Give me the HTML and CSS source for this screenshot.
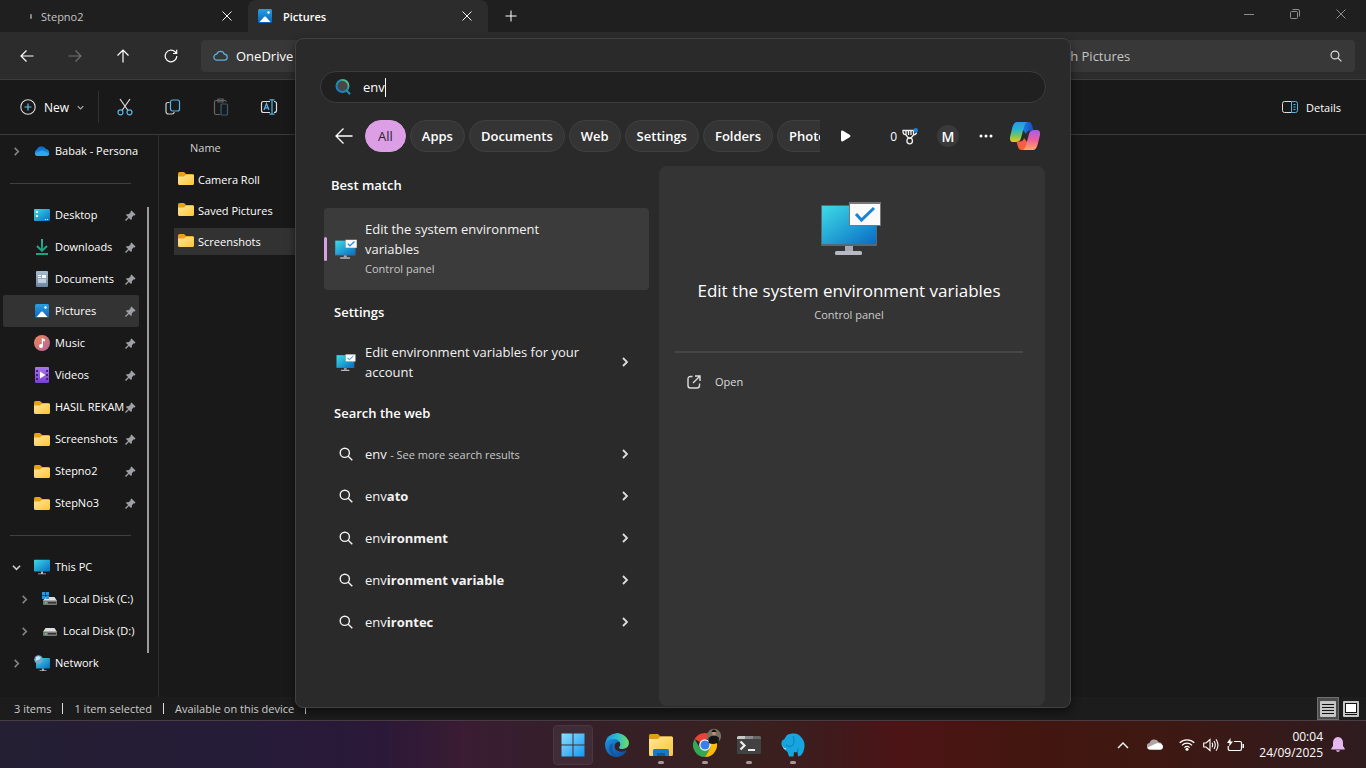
FILE: index.html
```
<!DOCTYPE html>
<html lang="en">
<head>
    <meta charset="UTF-8">
    <meta name="viewport" content="width=device-width, initial-scale=1.0">
    <title>Pictures - File Explorer</title>
    <link rel="stylesheet" href="styles.css">
</head>
<body>
    <!-- shared icons -->
    <svg class="sprite" aria-hidden="true">
        <defs>
            <linearGradient id="gScreen" x1="0" y1="0" x2="1" y2="1"><stop offset="0" stop-color="#3ddbe6"/><stop offset="1" stop-color="#0a6cc4"/></linearGradient>
            <linearGradient id="gFolder" x1="0" y1="0" x2="1" y2="1"><stop offset="0" stop-color="#ffe69a"/><stop offset="1" stop-color="#fdc633"/></linearGradient>
            <linearGradient id="gPicture" x1="0" y1="0" x2="0" y2="1"><stop offset="0" stop-color="#2a9fe0"/><stop offset="1" stop-color="#0d62b8"/></linearGradient>
            <linearGradient id="gCloud" x1="0" y1="0" x2="0" y2="1"><stop offset="0" stop-color="#0a62bd"/><stop offset="1" stop-color="#2aa8f2"/></linearGradient>
            <linearGradient id="gMusic" x1="0" y1="0" x2="1" y2="1"><stop offset="0" stop-color="#f08a56"/><stop offset="1" stop-color="#b0629c"/></linearGradient>
            <linearGradient id="gVideo" x1="0" y1="0" x2="0" y2="1"><stop offset="0" stop-color="#a877f0"/><stop offset="1" stop-color="#7a3fd0"/></linearGradient>
            <linearGradient id="gDoc" x1="0" y1="0" x2="0" y2="1"><stop offset="0" stop-color="#a9bccd"/><stop offset="1" stop-color="#6c87a3"/></linearGradient>
            <linearGradient id="gDown" x1="0" y1="0" x2="0" y2="1"><stop offset="0" stop-color="#37c2a0"/><stop offset="1" stop-color="#16a27d"/></linearGradient>
            <linearGradient id="gLens" x1="1" y1="0" x2="0" y2="1"><stop offset="0" stop-color="#7fd07f"/><stop offset=".4" stop-color="#1b93a8"/><stop offset="1" stop-color="#1579d0"/></linearGradient>
            <linearGradient id="gWin" x1="0" y1="0" x2="1" y2="1"><stop offset="0" stop-color="#8be0ff"/><stop offset="1" stop-color="#1597f2"/></linearGradient>
            <linearGradient id="gEdgeTop" x1="0" y1="0" x2="1" y2="0"><stop offset="0" stop-color="#1f90dc"/><stop offset=".5" stop-color="#2cbcd2"/><stop offset="1" stop-color="#6de060"/></linearGradient>
            <linearGradient id="gEdgeLow" x1="0" y1="0" x2="1" y2="1"><stop offset="0" stop-color="#1e94e2"/><stop offset="1" stop-color="#0c4694"/></linearGradient>
            <linearGradient id="gCopTop" x1="0" y1="0" x2="1" y2="0"><stop offset="0" stop-color="#1a8be8"/><stop offset="1" stop-color="#1c48c4"/></linearGradient>
            <linearGradient id="gCopLeft" x1="0" y1="0" x2="0" y2="1"><stop offset="0" stop-color="#2a96ee"/><stop offset=".35" stop-color="#22b3d6"/><stop offset=".7" stop-color="#7cc45a"/><stop offset="1" stop-color="#f0c823"/></linearGradient>
            <linearGradient id="gCopRight" x1="0" y1="0" x2="0" y2="1"><stop offset="0" stop-color="#a45df0"/><stop offset=".5" stop-color="#ee5f9c"/><stop offset="1" stop-color="#fba868"/></linearGradient>

            <symbol id="folder" viewBox="0 0 16 13"><path fill="#e6a316" d="M0 2Q0 0 1.500 0H6L8 2H14.500Q16 2 16 3.500V6H0z"/><path fill="url(#gFolder)" d="M0 4.500H6L8 2.800H15Q16 2.800 16 4V11.500Q16 13 14.500 13H1.500Q0 13 0 11.500z"/></symbol>
            <symbol id="picture" viewBox="0 0 14 14"><rect width="14" height="14" rx="1.500" fill="url(#gPicture)"/><path fill="#fff" d="M1.500 13L6.200 7.800Q7 7 7.800 7.800L12.500 13z"/><circle cx="10.500" cy="3.500" r="1.200" fill="#fff"/></symbol>
            <symbol id="pin" viewBox="0 0 12 12"><path fill="#9da1a5" d="M7 0.500L11.500 5 10.500 6 9.600 5.800 7.500 8 7.400 10.200 6.600 11 4.300 8.600 1 12 0 11 3.400 7.700 1 5.400 1.800 4.600 4 4.500 6.200 2.400 6 1.500z"/></symbol>
            <symbol id="chevron" viewBox="0 0 10 10"><path fill="none" stroke="currentColor" stroke-width="1.800" d="M3 1L7 5 3 9"/></symbol>
            <symbol id="chevron-down" viewBox="0 0 10 10"><path fill="none" stroke="currentColor" stroke-width="1.800" d="M1 3L5 7 9 3"/></symbol>
            <symbol id="close" viewBox="0 0 10 10"><path fill="none" stroke="currentColor" d="M.5 .5L9.500 9.500M9.500 .5L.5 9.500"/></symbol>
            <symbol id="arrow" viewBox="0 0 14 14"><path fill="none" stroke="currentColor" stroke-width="1.200" d="M13.500 7H1M6.500 1.500L1 7l5.500 5.500"/></symbol>
            <symbol id="lens" viewBox="0 0 14 14"><g fill="none" stroke="currentColor" stroke-width="1.400"><circle cx="5.800" cy="5.800" r="4.600"/><path d="M9.200 9.200L13.300 13.300"/></g></symbol>
            <symbol id="monitor" viewBox="0 0 16 15"><rect width="16" height="12" rx=".8" fill="url(#gScreen)"/><path fill="#b5bcc4" d="M7 12h2v2h3v1H4v-1h3z"/></symbol>
            <symbol id="monitor-check" viewBox="0 0 60 53"><rect y="3" width="56" height="41" rx="1" fill="#52697a"/><rect x="1" y="4" width="54" height="38" fill="url(#gScreen)"/><path fill="#a9a9b3" d="M24 44h8v5h-8z"/><rect x="14" y="49" width="27" height="4" rx="1.500" fill="#b9b9c6"/><rect x="28" width="32" height="24" fill="#777"/><rect x="29" y="2" width="30" height="21" fill="#fafafa"/><path fill="none" stroke="#1a83d6" stroke-width="3" d="M35 12l5.500 6L53 6"/></symbol>
            <symbol id="drive" viewBox="0 0 14 8"><path fill="#dedede" d="M2.500 0h9L14 4H0z"/><rect y="3.500" width="14" height="4.500" rx="1" fill="#777"/><path fill="#333" d="M5 5h8v1.500H5z"/><path fill="#4be36b" d="M2 5h1.500v1.500H2z"/></symbol>
        </defs>
    </svg>

    <div class="desktop">
        <main class="window">
            <div class="titlebar">
                <div class="tab">
                    <span class="spinner"></span>
                    <span class="tab-name">Stepno2</span>
                    <button class="tab-close" aria-label="Close tab"><svg width="10" height="10"><use href="#close"/></svg></button>
                </div>
                <div class="tab tab-active">
                    <svg width="14" height="14"><use href="#picture"/></svg>
                    <span class="tab-name">Pictures</span>
                    <button class="tab-close" aria-label="Close tab"><svg width="10" height="10"><use href="#close"/></svg></button>
                </div>
                <button class="new-tab" aria-label="New tab"><svg width="12" height="12" viewBox="0 0 12 12"><path stroke="currentColor" d="M6 .5v11M.5 6h11"/></svg></button>
                <div class="controls">
                    <button aria-label="Minimize"><svg width="10" height="10" viewBox="0 0 10 10"><path stroke="currentColor" d="M0 5.500h10"/></svg></button>
                    <button aria-label="Restore"><svg width="10" height="10" viewBox="0 0 10 10"><g fill="none" stroke="currentColor"><rect x=".5" y="2.500" width="7" height="7" rx="1"/><path d="M2.500 .5H8Q9.500 .5 9.500 2V7.500"/></g></svg></button>
                    <button aria-label="Close"><svg width="10" height="10"><use href="#close"/></svg></button>
                </div>
            </div>

            <nav class="navbar">
                <button class="nav-btn" aria-label="Back"><svg width="14" height="14"><use href="#arrow"/></svg></button>
                <button class="nav-btn dim" aria-label="Forward"><svg class="flip" width="14" height="14"><use href="#arrow"/></svg></button>
                <button class="nav-btn" aria-label="Up"><svg class="up" width="14" height="14"><use href="#arrow"/></svg></button>
                <button class="nav-btn" aria-label="Refresh"><svg width="14" height="14" viewBox="0 0 14 14"><path fill="none" stroke="currentColor" stroke-width="1.200" d="M12.800 7A5.800 5.800 0 1 1 11 2.800L12.500 4.300M12.700 .8V4.500H9"/></svg></button>
                <div class="address">
                    <svg width="15" height="11" viewBox="0 0 15 11"><path fill="none" stroke="#5cb3dc" stroke-width="1.200" d="M4 10.200A3 3 0 0 1 3.700 4.200 4 4 0 0 1 11.300 4.200 3 3 0 0 1 11.200 10.200z"/></svg>
                    <span>OneDrive</span>
                </div>
                <div class="window-search">
                    <input type="text" aria-label="Search Pictures" placeholder="Search Pictures">
                    <svg width="12" height="12"><use href="#lens"/></svg>
                </div>
            </nav>

            <div class="toolbar">
                <button class="new-btn">
                    <svg width="16" height="16" viewBox="0 0 16 16"><circle cx="8" cy="8" r="7.200" fill="none" stroke="#ddd" stroke-width="1.100"/><path stroke="#62bfe8" stroke-width="1.200" d="M8 4.500v7M4.500 8h7"/></svg>
                    New
                    <svg class="small-chevron" width="7" height="7"><use href="#chevron-down"/></svg>
                </button>
                <button class="tool" aria-label="Cut"><svg width="16" height="18" viewBox="0 0 16 18"><g fill="none" stroke-width="1.200"><path stroke="#ddd" d="M3 1L11 12.500M13 1L5 12.500"/><g stroke="#55b5e6"><circle cx="3.500" cy="14.300" r="2.500"/><circle cx="12.500" cy="14.300" r="2.500"/></g></g></svg></button>
                <button class="tool" aria-label="Copy"><svg width="16" height="16" viewBox="0 0 16 16"><g fill="none" stroke-width="1.200"><path stroke="#ccc" d="M4.500 3.500H3Q1 3.500 1 5.500V12.500Q1 15 3.500 15H7Q9 15 9.300 13"/><rect x="5.500" y="1" width="9" height="11" rx="2" stroke="#55b5e6"/></g></svg></button>
                <button class="tool" aria-label="Paste"><svg width="16" height="18" viewBox="0 0 16 18"><g fill="none" stroke-width="1.200"><path stroke="#666" d="M7 16.500H3Q1.500 16.500 1.500 15V4Q1.500 2.500 3 2.500H12Q13 2.500 13 4M5 1h5v3H5z"/><rect x="8" y="6" width="6.500" height="11" rx="1" stroke="#365c72"/></g></svg></button>
                <button class="tool" aria-label="Rename"><svg width="18" height="16" viewBox="0 0 18 16"><g fill="none" stroke-width="1.200"><path stroke="#ddd" d="M10 2.500H3.500Q1.500 2.500 1.500 4.500V11.500Q1.500 13.500 3.500 13.500H10M14 2.500Q16.500 2.500 16.500 4.500V11.500Q16.500 13.500 14 13.500"/><path stroke="#55b5e6" d="M9.500 .8h5M12 .8v14.400M9.500 15.200h5M4 11l2.500-6.500L9 11M5 8.800h3"/></g></svg></button>
                <button class="details">
                    <svg width="16" height="12" viewBox="0 0 16 12"><g fill="none"><path stroke="#ddd" d="M9.500 .5H2.500Q.5 .5 .5 2.500V9.500Q.5 11.500 2.500 11.500H9.500"/><path stroke="#55b5e6" d="M9.500 .5H13.500Q15.500 .5 15.500 2.500V9.500Q15.500 11.500 13.500 11.500H9.500zM11.500 3.500h2M11.500 6h2M11.500 8.500h2"/></g></svg>
                    Details
                </button>
            </div>

            <div class="content">
                <aside class="sidebar">
                    <div class="tree">
                        <a class="node" href="#"><svg class="toggle" width="9" height="9"><use href="#chevron"/></svg><svg class="node-icon" viewBox="0 0 16 16"><path fill="url(#gCloud)" d="M3.500 13A3.500 3.500 0 0 1 2.800 6.500 5 5 0 0 1 12 6 3.600 3.600 0 0 1 12.500 13z"/><path fill="#2fa7ee" d="M3.500 13Q1 13 .8 10.500L8 7.500 15.500 11Q14.500 13 12.500 13z"/></svg><span>Babak - Persona</span></a>
                        <hr>
                        <a class="node pinned" href="#"><svg class="node-icon" viewBox="0 0 16 16"><rect y="2" width="16" height="12" rx="1" fill="url(#gScreen)"/><path fill="#fff" d="M2 4h2v2H2zM2 8h2v2H2zM11 12h1v1h-1zM13 12h1v1h-1z"/></svg><span>Desktop</span><svg class="pin"><use href="#pin"/></svg></a>
                        <a class="node pinned" href="#"><svg class="node-icon" viewBox="0 0 16 16"><path fill="none" stroke="url(#gDown)" stroke-width="1.800" d="M8.010 0L8 11.500M3 7L8 12 13 7"/><path fill="#1aa582" d="M2 14h12v2H2z"/></svg><span>Downloads</span><svg class="pin"><use href="#pin"/></svg></a>
                        <a class="node pinned" href="#"><svg class="node-icon" viewBox="0 0 16 16"><rect x="2" width="12" height="16" rx="1" fill="url(#gDoc)"/><path fill="#fff" d="M4 4h3v1H4zM4 6h3v1H4zM8 4h4v3H8zM4 8.500h8v1H4zM4 10.500h8v1H4z"/></svg><span>Documents</span><svg class="pin"><use href="#pin"/></svg></a>
                        <a class="node pinned node-active" href="#"><svg class="node-icon picture-icon" viewBox="0 0 14 14"><use href="#picture"/></svg><span>Pictures</span><svg class="pin"><use href="#pin"/></svg></a>
                        <a class="node pinned" href="#"><svg class="node-icon" viewBox="0 0 16 16"><circle cx="8" cy="8" r="8" fill="url(#gMusic)"/><circle cx="7" cy="11" r="2" fill="#fff"/><path fill="#fff" d="M7.800 3L11 4.500V6.500L9 5.700V11H7.800z"/></svg><span>Music</span><svg class="pin"><use href="#pin"/></svg></a>
                        <a class="node pinned" href="#"><svg class="node-icon" viewBox="0 0 16 16"><rect x="1" width="14" height="16" rx="1" fill="url(#gVideo)"/><path fill="#43217e" d="M2 3h2v2H2zM2 7h2v2H2zM2 11h2v2H2zM12 3h2v2h-2zM12 7h2v2h-2zM12 11h2v2h-2z"/><path fill="#fff" d="M6 4.500L11.500 8 6 11.500z"/></svg><span>Videos</span><svg class="pin"><use href="#pin"/></svg></a>
                        <a class="node pinned" href="#"><svg class="node-icon folder-icon"><use href="#folder"/></svg><span>HASIL REKAM</span><svg class="pin"><use href="#pin"/></svg></a>
                        <a class="node pinned" href="#"><svg class="node-icon folder-icon"><use href="#folder"/></svg><span>Screenshots</span><svg class="pin"><use href="#pin"/></svg></a>
                        <a class="node pinned" href="#"><svg class="node-icon folder-icon"><use href="#folder"/></svg><span>Stepno2</span><svg class="pin"><use href="#pin"/></svg></a>
                        <a class="node pinned" href="#"><svg class="node-icon folder-icon"><use href="#folder"/></svg><span>StepNo3</span><svg class="pin"><use href="#pin"/></svg></a>
                        <hr>
                        <a class="node" href="#"><svg class="toggle open" width="9" height="9"><use href="#chevron-down"/></svg><svg class="node-icon" viewBox="0 0 16 15"><use href="#monitor"/></svg><span>This PC</span></a>
                        <a class="node child" href="#"><svg class="toggle" width="9" height="9"><use href="#chevron"/></svg><svg class="node-icon" viewBox="0 0 16 16"><svg x="1" y="6" width="14" height="8"><use href="#drive"/></svg><path fill="#2b95e0" d="M0 1h3.200v3.200H0zM3.800 1H7v3.200H3.800zM0 4.800h3.200V8H0zM3.800 4.800H7V8H3.800z"/></svg><span>Local Disk (C:)</span></a>
                        <a class="node child" href="#"><svg class="toggle" width="9" height="9"><use href="#chevron"/></svg><svg class="node-icon" viewBox="0 0 16 16"><svg x="1" y="5" width="14" height="8"><use href="#drive"/></svg></svg><span>Local Disk (D:)</span></a>
                        <a class="node" href="#"><svg class="toggle" width="9" height="9"><use href="#chevron"/></svg><svg class="node-icon" viewBox="0 0 16 16"><svg x="2" y="3" width="14" height="13"><use href="#monitor"/></svg><circle cx="4.500" cy="4.500" r="4.300" fill="#6fa9cf"/><path fill="#c9e4f2" d="M2 2.500Q4 .5 6 2T4 5 2 4z"/></svg><span>Network</span></a>
                    </div>
                    <div class="scrollbar"></div>
                </aside>
                <section class="files">
                    <table class="file-table">
                        <thead><tr><th>Name</th></tr></thead>
                        <tbody>
                            <tr><td><svg class="file-icon"><use href="#folder"/></svg>Camera Roll</td></tr>
                            <tr><td><svg class="file-icon"><use href="#folder"/></svg>Saved Pictures</td></tr>
                            <tr class="selected"><td><svg class="file-icon"><use href="#folder"/></svg>Screenshots</td></tr>
                        </tbody>
                    </table>
                </section>
            </div>

            <footer class="status">
                <span>3 items</span>
                <span>1 item selected</span>
                <span>Available on this device</span>
                <div class="views">
                    <button class="view view-active" aria-label="Details view"><svg width="16" height="16" viewBox="0 0 16 16"><rect width="16" height="16" rx="1" fill="#c6c6c6"/><path stroke="#111" d="M2 3.500h12M2 6.500h12M2 9.500h12M2 12.500h12"/></svg></button>
                    <button class="view" aria-label="Large icons view"><svg width="16" height="16" viewBox="0 0 16 16"><rect width="16" height="16" rx="1" fill="#c6c6c6"/><rect x="2.500" y="2.500" width="11" height="9" fill="#fff" stroke="#111"/><path stroke="#111" d="M2 13.500h12"/></svg></button>
                </div>
            </footer>
        </main>

        <footer class="taskbar">
            <div class="apps">
                <button class="app app-active" aria-label="Start"><svg width="24" height="24" viewBox="0 0 24 24"><path fill="url(#gWin)" d="M.5 .5h11v11H.5zM12.500 .5h11v11h-11zM.5 12.500h11v11H.5zM12.500 12.500h11v11h-11z"/></svg></button>
                <button class="app" aria-label="Edge"><svg width="24" height="24" viewBox="0 0 24 24"><path fill="url(#gEdgeLow)" d="M0 12Q.5 5 7 4q5-.5 8 3l-1 2q-4 0-4.500 4 0 4.500 5 5.500 4 .6 7.500-1.500Q18.500 24 12 24 1 23.500 0 12z"/><path fill="url(#gEdgeTop)" d="M0 12Q1 1 12 0q8 .5 11.500 7.500Q25.500 15 18 16q-4 .3-4-1.700 2-1.800.8-5Q13 6 8.500 6 2 6.500 0 12z"/><path fill="#0d4d99" d="M8 10q-2.500 9 4 13Q6 23 4 17q-.5-5 4-7z" opacity=".6"/></svg></button>
                <button class="app running" aria-label="File Explorer"><svg width="24" height="24" viewBox="0 0 24 24"><path fill="#e09e12" d="M0 2.500Q0 1 1.500 1H9l2.500 2.500H23v8H0z"/><path fill="url(#gFolder)" d="M0 6h9l2.500-2.500H23Q24 3.500 24 5V21.500Q24 23 22.500 23H1.500Q0 23 0 21.500z"/><path fill="#1878ca" d="M4 23v-5.500Q4 16 5.500 16h13Q20 16 20 17.500V23z"/><path fill="#0e5aa4" d="M8 20h8v3H8z"/></svg></button>
                <button class="app running" aria-label="Chrome"><svg width="34" height="34" viewBox="0 0 34 34"><g transform="translate(5 5)"><path fill="#ea4335" d="M12 12L1.600 6A12 12 0 0 1 22.400 6H12z"/><path fill="#34a853" d="M1.600 6A12 12 0 0 0 12 24l5.200-9L6.800 15z"/><path fill="#fbbc04" d="M22.400 6A12 12 0 0 1 12 24l5.200-9V6z"/><circle cx="12" cy="12" r="5.800" fill="#fff"/><circle cx="12" cy="12" r="4.600" fill="#3b7ded"/></g><circle cx="26" cy="8" r="7.200" fill="#77705f"/><path fill="#171415" d="M20.500 15V10q2-2.500 5.500-2.500t5 2.500l-.5 4.500Q26 17 20.500 15z"/><ellipse cx="26" cy="5" rx="2" ry="2.500" fill="#b98c76"/><path fill="#161214" d="M23.500 4Q24 1.500 26 1.500T28.500 4z"/></svg></button>
                <button class="app running" aria-label="Terminal"><svg width="24" height="18" viewBox="0 0 24 18"><rect width="24" height="18" rx="1.500" fill="#424242"/><path fill="#c8c8c8" d="M0 1.500Q0 0 1.500 0H8v3H0z"/><path fill="#8b8b8b" d="M8 0h8v3H8z"/><path fill="#686868" d="M16 0h6.500Q24 0 24 1.500V3h-8z"/><path fill="none" stroke="#eee" stroke-width="2.200" d="M3.500 5.500L7.500 9.500 3.500 13.500M11 14h7"/></svg></button>
                <button class="app running" aria-label="Laragon"><svg width="24" height="24" viewBox="0 0 24 24"><path fill="#17a5e0" d="M6 2Q9 0 12.500 .5 17 0 20 4q4 4 3.500 10-.5 5-3.500 8.500l-3 1-.5-4.500q-2 .5-3.500 0l-.5 4.500H8L6.500 19Q2 16 .5 12 0 7 3 6.500z"/><path fill="none" stroke="#0c78ad" stroke-width=".9" d="M12 3q2.500 6-.5 9.500-3 2.500-6.500-.5M16.500 19.500l.5-4"/><path fill="#eee" d="M1.500 12.500q1 3 3.500 2.800l-.5 1.500Q2 16 1.500 12.500z"/></svg></button>
            </div>
            <div class="tray">
                <button class="tray-btn" aria-label="Show hidden icons"><svg width="12" height="8" viewBox="0 0 12 8"><path fill="none" stroke="#fff" stroke-width="1.400" d="M1 7L6 2 11 7"/></svg></button>
                <button class="tray-btn onedrive" aria-label="OneDrive"><svg width="16" height="11" viewBox="0 0 16 11"><path fill="#b0a4a4" d="M3 10A3 3 0 0 1 2.500 4 5 5 0 0 1 11.800 3.200 3.500 3.500 0 0 1 13 10z"/><path fill="#fff" d="M3 10.800Q.5 10.500 .3 8.500L9 4.500Q11 3.500 13 4.500 16 5.500 16 8T13.500 10.800z"/></svg></button>
                <button class="tray-btn status-icons" aria-label="Network, volume and battery">
                    <svg width="16" height="13" viewBox="0 0 16 13"><g fill="none" stroke="#fff" stroke-width="1.200"><path d="M.7 4.800A10.500 10.500 0 0 1 15.300 4.800M3 7.300A7 7 0 0 1 13 7.300M5.400 9.600A3.800 3.800 0 0 1 10.600 9.600"/></g><circle cx="8" cy="11.300" r="1.500" fill="#fff"/></svg>
                    <svg width="16" height="14" viewBox="0 0 16 14"><g fill="none" stroke="#fff" stroke-width="1.100"><path d="M.7 5v4H3l4 3.500v-11L3 5zM9 4.800Q10.300 7 9 9.200M11 3Q13.500 7 11 11M13 1.200Q17 7 13 12.800"/></g></svg>
                    <svg width="17" height="14" viewBox="0 0 17 14"><path fill="none" stroke="#fff" stroke-width="1.200" d="M7 3.500h6Q14.500 3.500 14.500 5v5.500Q14.500 12.500 13 12.500H3Q1.200 12.500 1.200 10.500V8"/><path fill="#fff" d="M3.500 0L0 5h2.500L2 8.500 6 3.500H3.500zM15.500 6h1.500v4h-1.500z"/></svg>
                </button>
                <div class="clock"><time>00:04</time><span>24/09/2025</span></div>
                <button class="tray-btn" aria-label="Notifications"><svg width="14" height="15" viewBox="0 0 14 15"><path fill="#e6b8ef" d="M7 0Q11.800 .5 12 5.500V9L13.700 11.500V12.500H.3V11.500L2 9V5.500Q2.200 .5 7 0zM5 13.200h4Q8.500 15 7 15T5 13.200z"/></svg></button>
            </div>
        </footer>

        <!-- start menu search -->
        <section class="flyout">
            <label class="search-box">
                <svg width="16" height="16" viewBox="0 0 16 16"><g fill="none" stroke="url(#gLens)" stroke-width="2"><circle cx="7.500" cy="7" r="6" fill="#4b4646"/><path d="M11.500 11.500L15 15.300"/></g></svg>
                <input class="search-input" type="text" value="env" aria-label="Search">
                <span class="caret"></span>
            </label>

            <div class="filters">
                <button class="back" aria-label="Back"><svg width="18" height="18" viewBox="0 0 18 18"><path fill="none" stroke="#fff" stroke-width="1.300" d="M17.500 9H1M8.500 1.500L1 9l7.500 7.500"/></svg></button>
                <div class="pills">
                    <button class="pill pill-active">All</button>
                    <button class="pill">Apps</button>
                    <button class="pill">Documents</button>
                    <button class="pill">Web</button>
                    <button class="pill">Settings</button>
                    <button class="pill">Folders</button>
                    <button class="pill">Photos</button>
                </div>
                <button class="more" aria-label="More filters"><svg width="10" height="12" viewBox="0 0 10 12"><path fill="#fff" d="M0 2Q0 0 2 .7L9 5Q10 6 9 7L2 11.300Q0 12 0 10z"/></svg></button>
                <div class="account">
                    <button class="rewards">0 <svg width="16" height="17" viewBox="0 0 16 17"><g fill="none" stroke="#eee" stroke-width="1.300"><path d="M4 2.500h7.500V7L9 10H6.500L4 7zM4 2.500H1V4Q1 6.500 4 6.800M11.500 6.800Q14.500 6.500 14.500 4.500M6.500 2.500V7M9 2.500V7"/><circle cx="7.700" cy="13" r="2.800"/></g><circle cx="13.800" cy="2.200" r="2.200" fill="#1683dc"/></svg></button>
                    <button class="avatar">M</button>
                    <button class="dots" aria-label="Options"><svg width="14" height="4" viewBox="0 0 14 4"><g fill="#fff"><circle cx="2" cy="2" r="1.500"/><circle cx="7" cy="2" r="1.500"/><circle cx="12" cy="2" r="1.500"/></g></svg></button>
                    <button class="copilot" aria-label="Copilot"><svg width="30" height="28" viewBox="0 0 30 28"><path fill="url(#gCopTop)" d="M10 0h8.500q2.500 0 3.500 3l1.500 5.500H20q-3 0-4 3.500l-3-4z"/><path fill="url(#gCopLeft)" d="M7 0h10q-2 1-3 5l-3 11q-1 4-5 4H3Q-.5 20 0 15L2.500 5Q4 0 7 0z"/><path fill="#f2603c" d="M20 28h-8.500q-2.500 0-3.500-3L6.500 19.500H10q3 0 4-3.500l3 4z"/><path fill="url(#gCopRight)" d="M23 28H13q2-1 3-5l3-11q1-4 5-4h3q3.500 0 3 5l-2.500 10Q26 28 23 28z"/></svg></button>
                </div>
            </div>

            <div class="results">
                <div class="list">
                    <h2 class="heading heading-first">Best match</h2>
                    <button class="result result-best">
                        <svg class="app-icon" width="22" height="20"><use href="#monitor-check"/></svg>
                        <span class="result-text">Edit the system environment variables<small>Control panel</small></span>
                    </button>
                    <h2 class="heading">Settings</h2>
                    <button class="result result-setting">
                        <svg class="app-icon" width="19" height="17"><use href="#monitor-check"/></svg>
                        <span class="result-text">Edit environment variables for your account</span>
                        <svg class="go"><use href="#chevron"/></svg>
                    </button>
                    <h2 class="heading">Search the web</h2>
                    <button class="result"><svg class="app-icon" width="14" height="14"><use href="#lens"/></svg><span class="result-text">env <small class="inline">- See more search results</small></span><svg class="go"><use href="#chevron"/></svg></button>
                    <button class="result"><svg class="app-icon" width="14" height="14"><use href="#lens"/></svg><span class="result-text">env<b>ato</b></span><svg class="go"><use href="#chevron"/></svg></button>
                    <button class="result"><svg class="app-icon" width="14" height="14"><use href="#lens"/></svg><span class="result-text">env<b>ironment</b></span><svg class="go"><use href="#chevron"/></svg></button>
                    <button class="result"><svg class="app-icon" width="14" height="14"><use href="#lens"/></svg><span class="result-text">env<b>ironment variable</b></span><svg class="go"><use href="#chevron"/></svg></button>
                    <button class="result"><svg class="app-icon" width="14" height="14"><use href="#lens"/></svg><span class="result-text">env<b>irontec</b></span><svg class="go"><use href="#chevron"/></svg></button>
                </div>
                <div class="preview">
                    <svg class="preview-icon" width="60" height="53"><use href="#monitor-check"/></svg>
                    <h1>Edit the system environment variables</h1>
                    <p>Control panel</p>
                    <hr>
                    <button class="open-btn"><svg width="14" height="14" viewBox="0 0 14 14"><path fill="none" stroke="currentColor" stroke-width="1.400" d="M5.500 1.500H3.500Q1 1.500 1 4V10.500Q1 13 3.500 13H10Q12.500 13 12.500 10.500V8.500M8 1H13V6M13 1L6 8"/></svg>Open</button>
                </div>
            </div>
        </section>
    </div>
</body>
</html>
```
FILE: styles.css
```
* {
    box-sizing: border-box;
}
body {
    margin: 0;
    font-family: "Open Sans", "Noto Sans", sans-serif;
    font-size: 11px;
    color: #fff;
    background: #191919;
}
button, input {
    font: inherit;
    color: inherit;
    background: none;
    border: 0;
    padding: 0;
    outline: none;
}
button {
    display: flex;
    align-items: center;
    justify-content: center;
}
a {
    color: inherit;
    text-decoration: none;
}
svg {
    flex: none;
    display: block;
}
.sprite {
    position: absolute;
    width: 0;
    height: 0;
}
.desktop {
    position: relative;
    display: flex;
    flex-direction: column;
    height: 100vh;
    overflow: hidden;
}
.window {
    flex: 1;
    min-height: 0;
    display: flex;
    flex-direction: column;
}

/* title bar */
.titlebar {
    display: flex;
    height: 32px;
    background: #1f1f1f;
}
.tab {
    display: flex;
    align-items: center;
    gap: 11px;
    width: 240px;
    padding: 0 10px;
    color: #c4c4c4;
}
.tab:first-child {
    width: 248px;
    gap: 9px;
    padding: 0 16px 0 30px;
}
.tab-active {
    background: #2c2c2c;
    border-radius: 8px 8px 0 0;
    color: #fff;
    font-weight: 600;
}
.tab-name {
    flex: 1;
}
.tab-close {
    width: 22px;
    height: 22px;
    color: #eee;
}
.tab:first-child .tab-close {
    width: 10px;
}
.spinner {
    width: 2px;
    height: 5px;
    background: #888;
    border-radius: 1px;
}
.new-tab {
    width: 46px;
}
.controls {
    display: flex;
    margin-left: auto;
    padding-right: 2px;
    height: 28px;
    color: #8d8d8d;
}
.controls button {
    width: 46px;
}

/* address row */
.navbar {
    display: flex;
    align-items: center;
    height: 48px;
    padding: 0 11px 0 3px;
    background: #2c2c2c;
    border-bottom: 1px solid #3d3d3d;
}
.nav-btn {
    width: 48px;
    height: 32px;
}
.dim {
    color: #6f6f6f;
}
.flip {
    transform: rotate(180deg);
}
.up {
    transform: rotate(90deg);
}
.address, .window-search {
    display: flex;
    align-items: center;
    height: 32px;
    border-radius: 4px;
    background: #383838;
    font-size: 13px;
}
.address {
    flex: 1;
    gap: 8px;
    margin: 0 10px 0 6px;
    padding-left: 12px;
}
.window-search {
    width: 332px;
    padding: 0 13px 0 14px;
    color: #ddd;
}
.window-search input {
    flex: 1;
}
.window-search input::placeholder {
    color: #c5c5c5;
}

/* command bar */
.toolbar {
    display: flex;
    align-items: center;
    height: 55px;
    padding-right: 25px;
    border-bottom: 1px solid #3a3a3a;
}
.new-btn {
    gap: 8px;
    width: 99px;
    height: 32px;
    margin-right: 2px;
    padding-left: 6px;
    border-right: 1px solid #303030;
    font-size: 12px;
}
.small-chevron {
    color: #aaa;
}
.tool {
    width: 48px;
    height: 32px;
}
.details {
    gap: 8px;
    margin-left: auto;
}

/* sidebar */
.content {
    flex: 1;
    min-height: 0;
    display: flex;
}
.sidebar {
    display: flex;
    width: 159px;
    border-right: 1px solid #2e2e2e;
}
.tree {
    width: 140px;
    margin-right: 7px;
}
.tree hr {
    height: 1px;
    margin: 16px 9px 15px 10px;
    border: 0;
    background: #404040;
}
.node {
    display: flex;
    align-items: center;
    height: 32px;
    padding-left: 12px;
    white-space: nowrap;
}
.node span {
    flex: 1;
    min-width: 0;
    padding-bottom: 2px;
}
.toggle {
    margin-right: 13px;
    color: #858585;
}
.toggle.open {
    color: #ccc;
}
.child {
    padding-left: 20px;
}
.node-icon {
    width: 16px;
    height: 16px;
    margin-right: 5px;
}
.folder-icon {
    height: 13px;
}
.picture-icon {
    height: 14px;
}
.pinned {
    margin: 0 1px 0 3px;
    padding: 0 3px 0 31px;
    border-radius: 2px;
}
.node-active {
    background: #333;
}
.pin {
    width: 11px;
    height: 11px;
    margin-left: 2px;
}
.scrollbar {
    width: 2px;
    margin: 72px 0 44px;
    background: #9b9b9b;
}

/* file list */
.files {
    flex: 1;
    padding-left: 15px;
}
.file-table {
    width: 70%;
    border-spacing: 0 4px;
}
.file-table th {
    height: 23px;
    padding: 0 16px 6px;
    color: #d0d0d0;
    font-weight: 400;
    text-align: left;
}
.file-table td {
    height: 27px;
    padding: 0 4px;
}
.file-icon {
    display: inline-block;
    width: 16px;
    height: 13px;
    margin-right: 4px;
    vertical-align: -1px;
}
.selected {
    background: #323232;
}

/* status bar */
.status {
    display: flex;
    align-items: center;
    height: 23px;
    padding: 0 7px 0 14px;
    background: #1c1c1c;
    color: #ccc;
}
.status > span {
    display: flex;
    align-items: center;
}
.status > span::after {
    content: "";
    width: 1px;
    height: 11px;
    margin: 0 11px;
    background: #ddd;
}
.views {
    display: flex;
    gap: 4px;
    margin-left: auto;
}
.view {
    height: 23px;
}
.view-active {
    width: 22px;
    background: #4c4c4c;
    border: 1px solid #707070;
}

/* taskbar */
.taskbar {
    display: grid;
    grid-template-columns: 1fr auto 1fr;
    align-items: center;
    height: 48px;
    border-top: 1px solid #4b3c46;
    background: linear-gradient(90deg, #241f33 0%, #251c38 18%, #2b1838 28%, #3a1c33 34%, #35202a 41%, #38211f 55%, #401a1c 61%, #4d1416 66%, #43160f 75%, #3e1812 85%, #341a1a 94%, #2e1c1e 100%);
}
.apps {
    grid-column: 2;
    display: flex;
    gap: 4px;
}
.app {
    position: relative;
    width: 40px;
    height: 40px;
    border-radius: 4px;
}
.app-active {
    background: #402c36;
    border: 1px solid #4a3640;
}
.running::after {
    content: "";
    position: absolute;
    bottom: 1px;
    width: 6px;
    height: 3px;
    border-radius: 2px;
    background: #a89798;
}
.tray {
    display: flex;
    align-items: center;
    justify-content: flex-end;
    padding-right: 21px;
}
.onedrive {
    margin: 0 16px 0 18px;
}
.status-icons {
    gap: 8px;
}
.clock {
    display: flex;
    flex-direction: column;
    align-items: flex-end;
    margin: 0 8px 0 15px;
    font-size: 12px;
    line-height: 16px;
}

/* search flyout */
.flyout {
    position: absolute;
    top: 38px;
    bottom: 60px;
    left: 0;
    right: 0;
    width: 776px;
    margin: 0 auto;
    padding: 32px 24px 1px;
    display: flex;
    flex-direction: column;
    background: #2a2a2a;
    border: 1px solid #414141;
    border-radius: 8px;
    box-shadow: 0 4px 10px rgba(0, 0, 0, 0.5);
    font-size: 13px;
}
.search-box {
    display: flex;
    align-items: center;
    height: 32px;
    padding: 0 14px;
    background: #202020;
    border: 1px solid #3c3c3c;
    border-radius: 16px;
}
.search-input {
    margin-left: 12px;
    field-sizing: content;
}
.caret {
    width: 1px;
    height: 19px;
    background: #fff;
}
.filters {
    display: flex;
    align-items: center;
    margin-top: 17px;
    padding-left: 15px;
}
.back {
    width: 18px;
    margin-right: 12px;
}
.pills {
    display: flex;
    gap: 4px;
    width: 455px;
    overflow: hidden;
}
.pill {
    flex: none;
    height: 32px;
    padding: 0 11px;
    background: #343434;
    border: 1px solid #404040;
    border-radius: 16px;
    font-weight: 600;
}
.pill-active {
    padding: 0 12px;
    background: #dc9fe6;
    border-color: #dc9fe6;
    color: #2c1d30;
    font-weight: 400;
}
.more {
    margin-left: 21px;
}
.account {
    display: flex;
    align-items: center;
    margin-left: auto;
    padding-right: 6px;
}
.rewards {
    gap: 5px;
    font-size: 12px;
}
.avatar {
    width: 22px;
    height: 22px;
    margin: 0 20px 0 19px;
    border-radius: 50%;
    background: #3a3a3a;
    font-size: 14px;
    font-weight: 600;
}
.copilot {
    margin-left: 17px;
}
.results {
    flex: 1;
    min-height: 0;
    display: flex;
    gap: 10px;
    margin: 14px 1px 0 4px;
}
.list {
    width: 325px;
}
.heading {
    display: flex;
    align-items: center;
    height: 41px;
    margin: 0;
    padding-left: 10px;
    font-size: 13px;
    font-weight: 600;
}
.heading-first {
    height: 42px;
    padding: 0 0 4px 7px;
}
.result {
    position: relative;
    width: 100%;
    height: 42px;
    justify-content: flex-start;
    padding-right: 19px;
    border-radius: 4px;
    color: #f3f3f3;
    line-height: 20px;
    text-align: left;
}
.app-icon {
    width: 22px;
    margin: 0 8px 0 11px;
}
.result-text {
    flex: 1;
    max-width: 230px;
    font-weight: 500;
}
.result-text small {
    display: block;
    color: #c8c8c8;
    font-size: 11px;
}
.result-text .inline {
    display: inline;
}
.result-text b {
    font-weight: 700;
}
.result-best {
    height: 82px;
    margin-bottom: 1px;
    background: #3b3b3b;
}
.result-best::before {
    content: "";
    position: absolute;
    left: 0;
    width: 3px;
    height: 24px;
    border-radius: 2px;
    background: #d9a0e2;
}
.result-setting {
    height: 60px;
}
.go {
    width: 10px;
    height: 10px;
    margin-left: auto;
    color: #ddd;
}
.preview {
    flex: 1;
    display: flex;
    flex-direction: column;
    align-items: center;
    padding: 36px 22px 0 16px;
    background: #343434;
    border-radius: 8px;
}
.preview-icon {
    margin-left: 4px;
}
.preview h1 {
    margin: 22px 0 0;
    font-size: 17px;
    font-weight: 500;
    line-height: 28px;
    white-space: nowrap;
}
.preview p {
    margin: 0;
    color: #ccc;
    font-size: 11px;
    line-height: 20px;
}
.preview hr {
    align-self: stretch;
    height: 2px;
    margin: 26px 0 0;
    border: 0;
    background: #464646;
}
.open-btn {
    align-self: flex-start;
    gap: 14px;
    margin: 19px 0 0 12px;
    color: #ddd;
    font-size: 11px;
    line-height: 20px;
}
```
